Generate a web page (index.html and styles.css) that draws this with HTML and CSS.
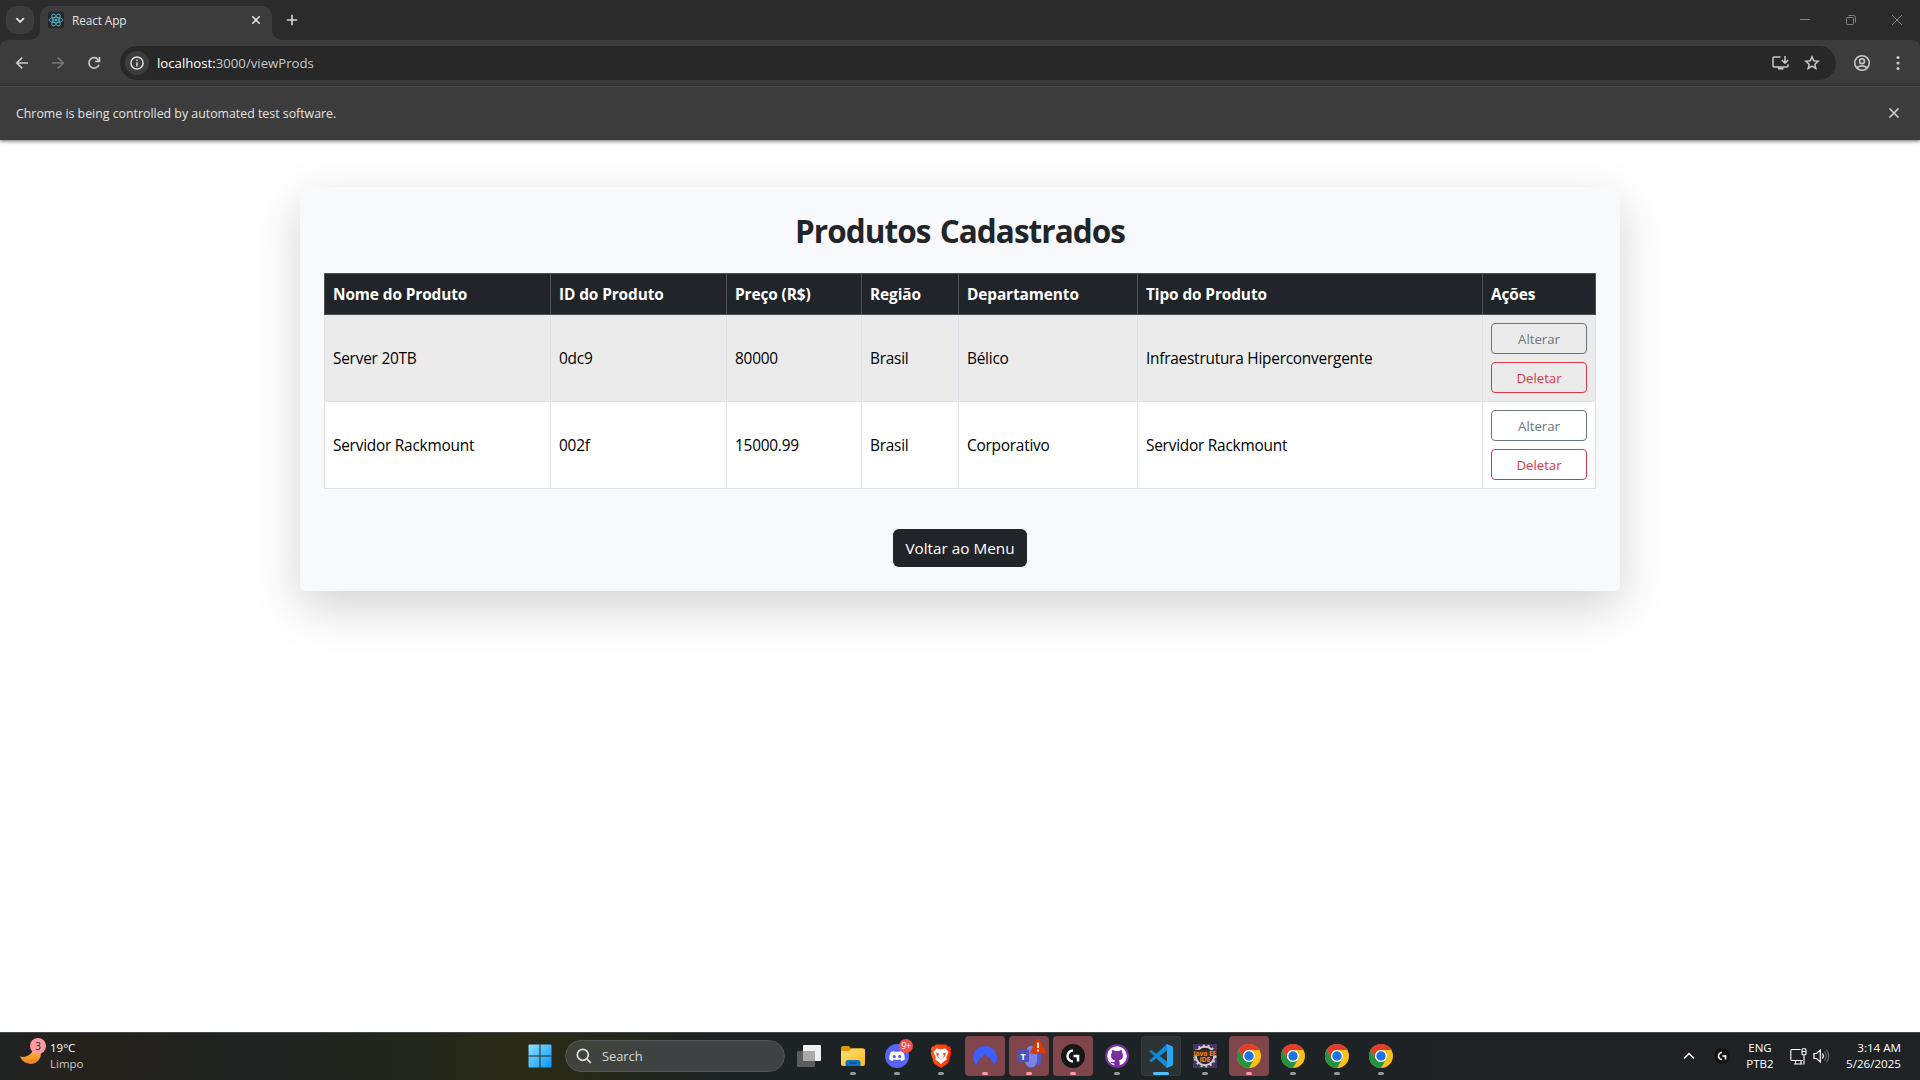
FILE: index.html
```html
<!DOCTYPE html>
<html lang="pt-BR">
<head>
<meta charset="utf-8">
<title>React App</title>
<link rel="stylesheet" href="styles.css">
</head>
<body>
<svg class="defs" width="0" height="0">
  <defs>
    <linearGradient id="win" x1="0" y1="0" x2="1" y2="1"><stop offset="0" stop-color="#8be3ff"/><stop offset="1" stop-color="#0a93fb"/></linearGradient>
    <linearGradient id="moon" x1="0" y1="0" x2="0" y2="1"><stop offset="0" stop-color="#f9c74a"/><stop offset="1" stop-color="#f27a1b"/></linearGradient>
    <linearGradient id="folder" x1="0" y1="0" x2="1" y2="1"><stop offset="0" stop-color="#ffdf7a"/><stop offset="1" stop-color="#fbbc1c"/></linearGradient>
    <linearGradient id="brave" x1="0" y1="0" x2="1" y2="0"><stop offset="0" stop-color="#ff5a1f"/><stop offset="1" stop-color="#ff2a00"/></linearGradient>
    <symbol id="chrome" viewBox="0 0 24 24">
      <circle cx="12" cy="12" r="12" fill="#fbc116"/>
      <path d="M1.6 6a12 12 0 0 1 20.8 0H12a6 6 0 0 0-5.2 9z" fill="#e33b2e"/>
      <path d="M1.6 6a12 12 0 0 0 10.4 18l5.2-9a6 6 0 0 1-10.4 0z" fill="#229342"/>
      <circle cx="12" cy="12" r="6" fill="#fff"/>
      <circle cx="12" cy="12" r="4.7" fill="#1a73e8"/>
    </symbol>
  </defs>
</svg>

<header class="tabstrip">
  <div class="tab-search"><svg width="28" height="28" fill="none" stroke="#e3e3e3" stroke-width="1.8"><path d="M10.3 12.2l3.8 3.8 3.8-3.8"/></svg></div>
  <div class="tab">
    <svg class="favicon" width="16" height="16" viewBox="0 0 16 16"><rect width="16" height="16" rx="1.5" fill="#222629"/><g fill="none" stroke="#58c4dc" stroke-width=".8"><ellipse cx="8" cy="8" rx="6.8" ry="2.7"/><ellipse cx="8" cy="8" rx="6.8" ry="2.7" transform="rotate(60 8 8)"/><ellipse cx="8" cy="8" rx="6.8" ry="2.7" transform="rotate(120 8 8)"/></g><circle cx="8" cy="8" r="1.3" fill="#58c4dc"/></svg>
    <span class="tab-title">React App</span>
    <svg width="10" height="10" fill="none" stroke="#dedede" stroke-width="1.6"><path d="M1.3 1.3l7.4 7.4M8.700 1.300l-7.400 7.400"/></svg>
  </div>
  <svg class="new-tab" width="12" height="12" fill="none" stroke="#d8d8d8" stroke-width="1.6"><path d="M6 .8v10.400M.8 6h10.400"/></svg>
  <div class="window-controls">
    <svg width="10" height="10" stroke="#858585"><path d="M0 4.500h10"/></svg>
    <svg width="10" height="10" fill="none" stroke="#858585"><rect x=".5" y="2.500" width="7" height="7" rx="1"/><path d="M2.500 .5h5a2 2 0 0 1 2 2v5"/></svg>
    <svg width="10" height="10" stroke="#858585"><path d="M0 0l10 10M10 0L0 10"/></svg>
  </div>
</header>

<div class="toolbar">
  <svg width="16" height="16" fill="none" stroke="#c7c7c7" stroke-width="1.700"><path d="M14 8H3M8.200 2.600L2.800 8l5.400 5.400"/></svg>
  <svg width="16" height="16" fill="none" stroke="#777" stroke-width="1.700"><path d="M2 8h11M7.800 2.600L13.200 8l-5.400 5.400"/></svg>
  <svg width="16" height="16" fill="none" stroke="#c7c7c7" stroke-width="1.700"><path d="M13 9.700A5.200 5.200 0 1 1 12.200 4.700L13.400 6M13.500 2v4.300H9.200"/></svg>
  <div class="omnibox">
    <span class="info"><svg width="14" height="14" fill="none" stroke="#dcdcdc" stroke-width="1.500"><circle cx="7" cy="7" r="6.100"/><path d="M7 6.200v4.300M7 3.500v1.500"/></svg></span>
    <span class="url"><b>localhost:</b>3000/viewProds</span>
    <svg class="install" width="17" height="16" fill="none" stroke="#c7c7c7" stroke-width="1.500"><path d="M8.500 2H2.200Q1 2 1 3.200v7.600Q1 12 2.200 12h12.600Q16 12 16 10.800V9.200M13 1v6.500M9.800 5l3.200 3.200L16.200 5"/><path d="M6 13.500h5.500" stroke-width="2.200"/></svg>
    <svg width="16" height="16" viewBox="0 0 16 16" fill="none" stroke="#c7c7c7" stroke-width="1.500"><path d="M8 1.800l1.750 4.050 4.400.4-3.320 2.900.99 4.300L8 11.200l-3.820 2.250.99-4.300-3.320-2.900 4.400-.4z"/></svg>
  </div>
  <svg class="profile" width="18" height="18" fill="none" stroke="#c7c7c7" stroke-width="1.600"><circle cx="9" cy="9" r="7.300"/><circle cx="9" cy="7.200" r="2.400"/><path d="M3.800 13.700q5.200-3.600 10.400 0"/></svg>
  <svg width="4" height="16" fill="#c7c7c7"><circle cx="2" cy="2.500" r="1.600"/><circle cx="2" cy="8" r="1.600"/><circle cx="2" cy="13.500" r="1.600"/></svg>
</div>

<div class="infobar">
  <span>Chrome is being controlled by automated test software.</span>
  <svg width="12" height="12" stroke="#d2d2d2" stroke-width="1.600"><path d="M1.500 1.500l9 9M10.500 1.500l-9 9"/></svg>
</div>

<main class="page">
  <section class="card">
    <h2>Produtos Cadastrados</h2>
    <table>
      <colgroup><col class="c-name"><col class="c-id"><col class="c-price"><col class="c-region"><col class="c-dept"><col class="c-type"><col class="c-actions"></colgroup>
      <thead>
        <tr><th>Nome do Produto</th><th>ID do Produto</th><th>Preço (R$)</th><th>Região</th><th>Departamento</th><th>Tipo do Produto</th><th>Ações</th></tr>
      </thead>
      <tbody>
        <tr><td>Server 20TB</td><td>0dc9</td><td>80000</td><td>Brasil</td><td>Bélico</td><td>Infraestrutura Hiperconvergente</td><td class="action-cell"><div class="actions"><button class="btn-edit">Alterar</button><button class="btn-delete">Deletar</button></div></td></tr>
        <tr><td>Servidor Rackmount</td><td>002f</td><td>15000.99</td><td>Brasil</td><td>Corporativo</td><td>Servidor Rackmount</td><td class="action-cell"><div class="actions"><button class="btn-edit">Alterar</button><button class="btn-delete">Deletar</button></div></td></tr>
      </tbody>
    </table>
    <button class="btn-back">Voltar ao Menu</button>
  </section>
</main>

<footer class="taskbar">
  <div class="weather">
    <div class="weather-icon">
      <svg width="24" height="24"><path d="M20 4C22 10 21 17 14 19.500 8 21 2 18 0 12.500 6 14 12 11 14 4z" fill="url(#moon)"/></svg>
      <span class="badge">3</span>
    </div>
    <div class="weather-text"><span>19°C</span><span class="dim">Limpo</span></div>
  </div>
  <div class="apps">
    <div class="app"><svg width="24" height="24" fill="url(#win)"><path d="M.5 1.500q0-1 1-1H11.500V11.500H.5zM12.500.5h10q1 0 1 1v10h-11zM.5 12.500h11v11h-10q-1 0-1-1zM12.500 12.500h11v10q0 1-1 1h-10z"/></svg></div>
    <div class="search"><svg width="16" height="16" fill="none" stroke="#dcdedf" stroke-width="1.700"><circle cx="6.800" cy="6.800" r="5.500"/><path d="M10.800 10.800l4 4"/></svg><span>Search</span></div>
    <div class="app"><svg width="24" height="24"><rect x="6" y="1" width="18" height="16" rx="1" fill="#f0f0f0"/><rect x="0" y="7" width="18" height="16" rx="1" fill="#5b5d5e"/><path d="M6 7h12v10H6z" fill="#aaa"/></svg></div>
    <div class="app run"><svg width="24" height="24"><path d="M0 4q0-2 2-2h6l2 2.500h12q2 0 2 2V10H0z" fill="#d99b0b"/><path d="M0 7h8l3-2.500h11q2 0 2 2V20q0 2-2 2H2q-2 0-2-2z" fill="url(#folder)"/><path d="M4.500 22v-3.500q0-2.500 2.500-2.500h10q2.500 0 2.500 2.500V22z" fill="#0d73c4"/><path d="M8 19h8" stroke="#064a85" stroke-width="1.200"/></svg></div>
    <div class="app run"><svg width="24" height="24"><circle cx="12" cy="12" r="12" fill="#5865f2"/><path d="M8.500 7.200L10 7.800h4l1.500-.6q2 .3 3 1.200 1.600 3.600 1.200 7.100-1.700 1.300-3.400 1.500l-1-1.500q-3.300.8-6.600 0l-1 1.500q-1.700-.2-3.400-1.500Q4 12 5.500 8.400q1.200-.9 3-1.200z" fill="#fff"/><circle cx="9.300" cy="12.500" r="1.600" fill="#5865f2"/><circle cx="14.700" cy="12.500" r="1.600" fill="#5865f2"/></svg><span class="badge-count">9+</span></div>
    <div class="app run"><svg width="24" height="24"><path d="M7 .5h10l2 2 1.500-.3L22.200 5l-.7 2 .7 2.500-3.200 10L12 24l-7-4.500L1.800 9.500 2.500 7l-.7-2 1.700-2.800L5 2.500z" fill="url(#brave)"/><path d="M7.500 4.500l4.500.8 4.500-.8L19.500 8l-2.200 5.500.4 2-3.200 2.200L12 20l-2.500-2.300-3.200-2.200.4-2L4.500 8z" fill="#fff"/><path d="M6.700 8.500l3.500 1L9 12l1.800 2.500L12 15l1.200-.5L15 12l-1.200-2.500 3.500-1-2 4.500-3.300 2.500L8.700 13z" fill="#ff4316"/></svg></div>
    <div class="app run alert"><svg width="24" height="24"><path d="M2.800 21Q0 17.500 0 13.500C0 7 5.400 2 12 2s12 5 12 11.500q0 4-2.800 7.500L16 12.800l-.8 1.400L12 9l-3.200 5.200-.7-1.400z" fill="#3e5fff"/></svg></div>
    <div class="app run alert"><svg width="24" height="24"><circle cx="21" cy="8" r="2.500" fill="#5059c9"/><circle cx="14" cy="6" r="4" fill="#7b83eb"/><path d="M17 10h7v7q0 4-4.500 4.500z" fill="#5059c9"/><path d="M8 10h12v7a6 6.500 0 0 1-12 0z" fill="#7b83eb"/><rect x="0" y="6" width="12" height="12" rx="1" fill="#4b53bc"/><text class="teams-t" x="6" y="15.500">T</text></svg><svg class="warning" width="16" height="15"><path d="M8 0q1 0 1.600 1L15.700 13q.6 1.500-1 1.500H1.300Q-.3 14.500.3 13L6.400 1Q7 0 8 0z" fill="#d83b01"/><path d="M8 3.500v5.500M8 10.500v2" stroke="#fff" stroke-width="1.700"/></svg></div>
    <div class="app run alert"><svg width="24" height="24"><circle cx="12" cy="12" r="12" fill="#161616"/><path d="M12 6.500a5.500 5.500 0 1 0 0 11M12.500 12h4.500v5.500" fill="none" stroke="#fff" stroke-width="2.500"/></svg></div>
    <div class="app run"><svg width="24" height="24"><circle cx="12" cy="12" r="12" fill="#7b2da0"/><circle cx="12" cy="12" r="9.800" fill="#fff"/><path d="M9.300 22v-2.600q-3.600.5-4.200-1.900l2.500.5q.8.200 1.800 0 .1-1 .7-1.600C7.300 15.900 6 14.600 6 11.500q0-1.700 1-2.800-.4-1.500.2-2.700 1.500.1 2.800 1.100 2-.4 4 0 1.300-1 2.800-1.100.6 1.200.2 2.700 1 1.100 1 2.800c0 3.100-1.300 4.400-4.100 4.900q.8.800.8 2.300V22q-2.700.6-5.400 0z" fill="#7b2da0"/></svg></div>
    <div class="app active"><svg width="24" height="24"><path d="M18 0L7.500 9.800 2.500 6 0 7.300 18 24l.5-5.600z" fill="#0f7fca"/><path d="M18 24L7.500 14.200 2.500 18 0 16.700 18 0v6.500z" fill="#1389d6"/><path d="M18 6.500L10.800 12l7.200 5.500z" fill="#2d3235"/><path d="M18 0l6 2.800v18.400L18 24z" fill="#2ba5ef"/></svg></div>
    <div class="app run"><svg width="24" height="24"><rect width="24" height="24" fill="#443564"/><circle cx="12" cy="12" r="9.200" fill="#292133" stroke="#d0cdc9" stroke-width="2"/><circle cx="12" cy="12" r="10.500" fill="none" stroke="#d0cdc9" stroke-width="2" stroke-dasharray="2 2.700"/><path d="M0 6h24v5.500H0zM6 12h12v6H6z" fill="#3c2923"/><text class="jee" x="12" y="11.500" textLength="23">Java EE</text><text class="jee" x="12" y="18" textLength="11">IDE</text></svg></div>
    <div class="app run alert"><svg width="24" height="24"><use href="#chrome"/></svg></div>
    <div class="app run"><svg width="24" height="24"><use href="#chrome"/></svg></div>
    <div class="app run"><svg width="24" height="24"><use href="#chrome"/></svg></div>
    <div class="app run"><svg width="24" height="24"><use href="#chrome"/></svg></div>
  </div>
  <div class="tray">
    <svg width="12" height="8" fill="none" stroke="#fff" stroke-width="1.500"><path d="M1 6.500l5-5 5 5"/></svg>
    <svg class="tray-g" width="16" height="16"><circle cx="8" cy="8" r="8" fill="#141414"/><path d="M8 4.500a3.500 3.500 0 1 0 0 7M8.300 8h3.200v3.500" fill="none" stroke="#fff" stroke-width="1.700"/></svg>
    <div class="lang"><span>ENG</span><span>PTB2</span></div>
    <svg class="net" width="17" height="17" fill="none" stroke="#fff" stroke-width="1.100"><path d="M10.500 1.500H2Q.8 1.500.8 2.700v8.600q0 1.200 1.200 1.200h11M4 16h8.500M5.500 12.500V16M11 12.500V16M14 7v9.500"/><rect x="12" y=".8" width="4" height="6" rx="1"/><path d="M12 3.500h4"/></svg>
    <svg width="17" height="16" fill="none" stroke="#fff" stroke-width="1.200"><path d="M1 5.500h2.500L7.300 2v12L3.500 10.500H1zM9.300 5.500q2 2.500 0 5"/><path d="M11.500 3.500q3.500 4.500 0 9M13.500 1.800q4.500 6.200 0 12.400" stroke="#666"/></svg>
    <div class="clock"><span>3:14 AM</span><span>5/26/2025</span></div>
  </div>
</footer>
</body>
</html>
```
FILE: styles.css
```css
* { box-sizing: border-box; }
body {
  margin: 0;
  height: 1080px;
  display: flex;
  flex-direction: column;
  overflow: hidden;
  background: #fff;
  font-family: "Open Sans", "Noto Sans", sans-serif;
}
svg { display: block; flex: none; }
.defs { position: absolute; }
button { font-family: inherit; }

/* Browser window */
.tabstrip {
  height: 40px;
  flex: none;
  display: flex;
  align-items: flex-start;
  padding: 6px 17px 0 6px;
  background: #2b2b2b;
}
.tab-search { width: 28px; height: 28px; border-radius: 10px; background: #3c3c3c; }
.tab {
  position: relative;
  display: flex;
  align-items: center;
  width: 232px;
  height: 34px;
  margin-left: 6px;
  padding: 0 11px 6px 8px;
  border-radius: 10px 10px 0 0;
  background: #3c3c3c;
}
.tab::before, .tab::after {
  content: "";
  position: absolute;
  bottom: 0;
  width: 10px;
  height: 10px;
}
.tab::before { left: -10px; background: radial-gradient(circle at 0 0, transparent 9.5px, #3c3c3c 10px); }
.tab::after { right: -10px; background: radial-gradient(circle at 100% 0, transparent 9.5px, #3c3c3c 10px); }
.tab-title { flex: 1; margin-left: 8px; color: #e3e3e3; font-size: 11.8px; letter-spacing: -.1px; }
.new-tab { margin: 8px 0 0 14px; }
.window-controls { display: flex; gap: 36px; margin: 9px 1px 0 auto; }
.toolbar {
  height: 46px;
  flex: none;
  display: flex;
  align-items: center;
  padding: 0 20px 0 14px;
  background: #3c3c3c;
  border-radius: 8px 8px 0 0;
  box-shadow: 0 -8px 0 #2b2b2b;
  clip-path: inset(0);
}
.toolbar > svg + svg { margin-left: 20px; }
.omnibox {
  flex: 1;
  height: 34px;
  display: flex;
  align-items: center;
  margin-left: 18px;
  padding: 0 16px 0 5px;
  border-radius: 17px;
  background: #282828;
}
.info { width: 24px; height: 24px; display: grid; place-items: center; border-radius: 50%; background: #3c3c3c; }
.url { flex: 1; margin-left: 8px; color: #c7c7c7; font-size: 13.2px; }
.url b { color: #fff; font-weight: 400; }
.install { margin-right: 15px; }
.toolbar .profile { margin: 0 0 0 17px; }
.toolbar .profile + svg { margin-left: 25px; }
.infobar {
  position: relative;
  height: 54px;
  flex: none;
  display: flex;
  align-items: center;
  justify-content: space-between;
  padding: 0 20px 1px 16px;
  border-top: 1px solid #4a4a4a;
  background: #3c3c3c;
  box-shadow: 0 1px 4px rgba(0, 0, 0, .6);
  color: #e3e3e3;
  font-size: 12.35px;
}

/* Product list */
.page { flex: 1; padding-top: 47px; }
.card {
  width: 1320px;
  height: 404px;
  margin: 0 auto;
  padding: 24px;
  display: flex;
  flex-direction: column;
  align-items: center;
  border-radius: 6px;
  background: #f8f9fa;
  box-shadow: 0 16px 48px rgba(0, 0, 0, .175);
  color: #212529;
}
h2 { margin: 1px 0 23px; font-size: 31.5px; line-height: 38px; font-weight: 700; letter-spacing: -.95px; word-spacing: 2px; white-space: nowrap; }
table { width: 1272px; table-layout: fixed; border-collapse: collapse; font-size: 15.4px; letter-spacing: -.23px; line-height: 24px; }
.c-name { width: 226px; }
.c-id { width: 176px; }
.c-price { width: 135px; }
.c-region { width: 97px; }
.c-dept { width: 179px; }
.c-type { width: 345px; }
th, td { padding: 9px 8px 7px; text-align: left; vertical-align: middle; white-space: nowrap; }
th { border: 1px solid #4d5154; background: #212529; color: #fff; font-weight: 700; letter-spacing: -.1px; }
td { border: 1px solid #dee2e6; background: #fff; color: #000; }
tbody tr:first-child td { background: #ebebeb; }
.action-cell { padding: 8px; letter-spacing: 0; }
.actions { display: flex; flex-direction: column; gap: 8px; }
.actions button {
  height: 31px;
  padding: 0;
  border: 1px solid;
  border-radius: 4px;
  background: transparent;
  font-size: 13.2px;
}
.actions .btn-edit { color: #6c757d; }
.actions .btn-delete { color: #dc3545; }
.btn-back {
  width: 134px;
  height: 38px;
  margin-top: auto;
  padding: 0;
  border: 0;
  border-radius: 6px;
  background: #212529;
  color: #fff;
  font-size: 15.3px;
}

/* Desktop taskbar */
.taskbar {
  position: relative;
  height: 48px;
  flex: none;
  display: flex;
  align-items: center;
  padding-bottom: 1px;
  border-top: 1px solid #46484a;
  background: linear-gradient(90deg, #212324 0, #25221c 80px, #202423 260px, #23261b 420px, #2a2a16 530px, #262817 590px, #1d2225 720px, #1e2225 1400px, #202325 1920px);
  color: #fff;
  font-size: 11.5px;
  line-height: 16px;
}
.weather { width: 520px; display: flex; align-items: center; padding-left: 20px; }
.weather-icon { position: relative; }
.badge {
  position: absolute;
  left: 10px;
  top: -6px;
  width: 16px;
  height: 16px;
  border-radius: 50%;
  background: #ff99a4;
  color: #222;
  text-align: center;
  font-size: 10px;
}
.weather-text { display: flex; flex-direction: column; margin-left: 6px; }
.dim { color: #c4c4c4; }
.apps { display: flex; align-items: center; gap: 4px; }
.app { position: relative; width: 40px; height: 40px; display: grid; place-items: center; border-radius: 4px; }
.run::after, .active::after {
  content: "";
  position: absolute;
  left: 17px;
  bottom: 1px;
  width: 6px;
  height: 3px;
  border-radius: 2px;
  background: #969899;
}
.alert { background: #81454c; }
.alert::after { background: #ff99a4; }
.active { background: #2d3235; box-shadow: inset 0 0 0 1px #34393b; }
.active::after { left: 12px; width: 16px; background: #4cc2ff; }
.search {
  width: 220px;
  height: 32px;
  display: flex;
  align-items: center;
  gap: 10px;
  margin: 0 0 0 1px;
  padding-left: 10px;
  border: 1px solid #525655;
  border-radius: 16px;
  background: linear-gradient(90deg, #41423a, #3e4243 45%);
  color: #d4d6d6;
  font-size: 13px;
  letter-spacing: -.1px;
}
.badge-count {
  position: absolute;
  left: 22px;
  top: 3px;
  width: 14px;
  height: 14px;
  border-radius: 50%;
  background: #f04f54;
  font-size: 9px;
  line-height: 14px;
  text-align: center;
  letter-spacing: -.3px;
}
.warning { position: absolute; left: 21px; top: 3px; }
.teams-t { fill: #fff; font-size: 9px; font-weight: 700; text-anchor: middle; }
.jee { fill: #f5811f; font-size: 7px; font-weight: 700; text-anchor: middle; }
.tray { flex: 1; display: flex; align-items: center; justify-content: flex-end; padding-right: 19px; }
.tray-g { margin-left: 19px; }
.lang { width: 28px; display: flex; flex-direction: column; align-items: center; margin-left: 16px; }
.net { margin: 0 6px 0 16px; }
.clock { width: 60px; display: flex; flex-direction: column; align-items: flex-end; margin-left: 11px; font-size: 11.6px; }
```
